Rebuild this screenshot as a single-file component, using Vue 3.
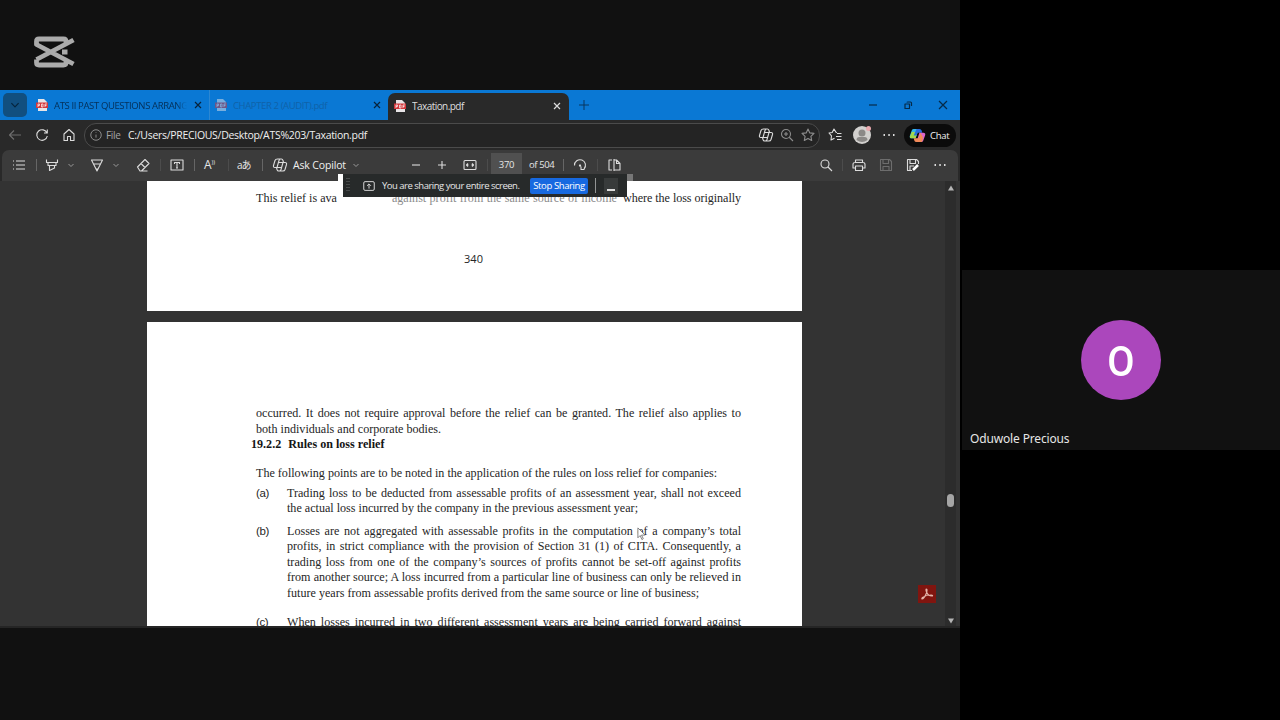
<script setup>
import { ref } from 'vue'

const page = ref(370)

const icons = {
  list: 'M2 4h1M2 8h1M2 12h1M5 4h9M5 8h9M5 12h9',
  highlighter: 'M2.500 2.500v3h11v-3M4 5.500v3h8v-3M5.500 8.500v5l5-2.500v-2.500',
  pen: 'M2.500 3h11L8 14zM4.500 7h7M7 12h2',
  eraser: 'M2.500 10l7.500-7.500 4 4-7.500 7.500h-1.500zM6 6.500l4 4M6.500 14h6',
  textbox: 'M2 3h12v10H2zM5.500 7V5.500h5V7M8 5.500v5.500M7 11h2',
  copilot: 'M5.500 2h4q1 0 1.500 1.500l.5 2H13q2 0 1.500 2L13 12.500q-.5 1.500-2 1.500H6.500q-1 0-1.500-1.500l-.5-2H3q-2 0-1.500-2L3 3.500Q3.500 2 5.500 2zM8.500 2Q7.500 2 7 3.500L5 10.500M7.500 14q1 0 1.500-1.500l2-7M6.500 5.500h5M4.500 10.500h5',
  minus: 'M4 8h8',
  plus: 'M4 8h8M8 4v8',
  fit: 'M3 3.500h10q1 0 1 1v7q0 1-1 1H3q-1 0-1-1v-7q0-1 1-1zM6 6.500L4.500 8 6 9.500M10 6.500L11.500 8 10 9.500M4.500 8h2M9.500 8h2',
  rotate: 'M2.500 8.500a5.500 5.500 0 1 1 9.500 3.500M9 9.500v3h3.500M7.500 8h1v1h-1z',
  pages: 'M6 3H3v10h3M8 2v12M8 3h2.500l3.500 3.500V13H8M10.500 3v3.500H14',
  search: 'M11 7a4 4 0 1 1-8 0 4 4 0 0 1 8 0zM10 10l4 4',
  print: 'M4.500 5.500V3h7v2.500M4.500 11H2V7.500q0-2 2-2h8q2 0 2 2V11h-2.500M4.500 9h7v4.500h-7z',
  save: 'M2.500 2.500h9l2 2v9h-11zM5 2.500v4h5.500v-4M5 13.500v-4h6v4',
  saveAs: 'M7 13.500H2.500v-11h9l2 2V7M5 2.500v4h5.500v-4M5 13v-4h4',
  dots: 'M2.500 8H4M7.300 8h1.500M12 8h1.500',
  back: 'M14 8H2.500M7 3.500L2.500 8 7 12.500',
  reload: 'M13 6A5.300 5.300 0 1 0 13.300 9M13.300 2.500V6H10',
  home: 'M3 7l5-4.500L13 7v6.500h-3.500V9.500h-3v4H3z',
  info: 'M14 8A6 6 0 1 1 2 8a6 6 0 0 1 12 0zM8 7.500v3.500M8 4.800v.7',
  zoomIn: 'M11.500 7a4.500 4.500 0 1 1-9 0 4.500 4.500 0 0 1 9 0zM10.500 10.500l3.500 3.500M7 5v4M5 7h4',
  star: 'M8 2l1.800 3.900 4.200.5-3.100 2.900.8 4.200L8 11.400l-3.700 2.100.8-4.200L2 6.400l4.200-.5z',
  favorites: 'M10 5.500L9 5.300 7 2 5.200 5.500 2 6l2.500 2.800L4 13l3.500-1.800M10 6.500h4.500M9 9.500h5.500M10 12.500h4.500',
  share: 'M3.500 3h9Q14 3 14 4.500v7q0 1.500-1.500 1.500h-9Q2 13 2 11.500v-7Q2 3 3.500 3zM8 11V6M5.800 7.800L8 5.600l2.200 2.200',
}

const rulesB = [
  'Losses are not aggregated with assessable profits in the computation of a company’s total',
  'profits, in strict compliance with the provision of Section 31 (1) of CITA. Consequently, a',
  'trading loss from one of the company’s sources of profits cannot be set-off against profits',
  'from another source; A loss incurred from a particular line of business can only be relieved in',
]
</script>

<template>
  <div class="meeting">
    <main class="shared">
      <header class="brand">
        <svg class="logo" viewBox="0 0 42 32">
          <path d="M33 8V5.500q0-2.500-2.500-2.500H6Q3.500 3 3.500 5.500V8.500L40.500 28M3.500 23.500L40.500 4M3.500 23.500v3Q3.500 29 6 29h24.500q2.500 0 2.500-2.500v-3M29 16h5.500" />
        </svg>
      </header>

      <section class="browser">
        <div class="tabs">
          <div class="tab-menu"><svg viewBox="0 0 10 10"><path d="M2 3.500l3 3 3-3" /></svg></div>
          <div class="tab first">
            <svg class="pdf" viewBox="0 0 12 12"><path class="sheet" d="M2 0h6l3 3v9H2z" /><path class="label" d="M0 3.500h12v5.500H0z" /><path class="mark" d="M2 8V5h1.500v1.500H2M5.500 5v3H7V5zM9 8V5h2M9 6.500h1.500" /></svg>
            <span class="tab-title">ATS II PAST QUESTIONS ARRANGE</span>
            <svg class="close" viewBox="0 0 8 8"><path d="M1 1l6 6M7 1L1 7" /></svg>
          </div>
          <div class="tab second">
            <svg class="pdf" viewBox="0 0 12 12"><path class="sheet" d="M2 0h6l3 3v9H2z" /><path class="label" d="M0 3.500h12v5.500H0z" /><path class="mark" d="M2 8V5h1.500v1.500H2M5.500 5v3H7V5zM9 8V5h2M9 6.500h1.500" /></svg>
            <span class="tab-title">CHAPTER 2 (AUDIT).pdf</span>
            <svg class="close" viewBox="0 0 8 8"><path d="M1 1l6 6M7 1L1 7" /></svg>
          </div>
          <div class="tab active">
            <svg class="pdf" viewBox="0 0 12 12"><path class="sheet" d="M2 0h6l3 3v9H2z" /><path class="label" d="M0 3.500h12v5.500H0z" /><path class="mark" d="M2 8V5h1.500v1.500H2M5.500 5v3H7V5zM9 8V5h2M9 6.500h1.500" /></svg>
            <span class="tab-title">Taxation.pdf</span>
            <svg class="close" viewBox="0 0 8 8"><path d="M1 1l6 6M7 1L1 7" /></svg>
          </div>
          <svg class="new-tab" viewBox="0 0 12 12"><path d="M6 1v10M1 6h10" /></svg>
          <div class="window-buttons">
            <svg viewBox="0 0 10 10"><path d="M1 5h8" /></svg>
            <svg viewBox="0 0 10 10"><path d="M2 4h4.500v4.500H2zM4 2.500Q4 2 5 2h2.500q1 0 1 1V6" /></svg>
            <svg viewBox="0 0 10 10"><path d="M1 1l8 8M9 1L1 9" /></svg>
          </div>
        </div>

        <div class="address-row">
          <svg class="icon dim back" viewBox="0 0 16 16"><path :d="icons.back" /></svg>
          <svg class="icon reload" viewBox="0 0 16 16"><path :d="icons.reload" /></svg>
          <svg class="icon home" viewBox="0 0 16 16"><path :d="icons.home" /></svg>
          <div class="address">
            <svg class="icon soft small" viewBox="0 0 16 16"><path :d="icons.info" /></svg>
            <span class="scheme">File</span>
            <span class="url">C:/Users/PRECIOUS/Desktop/ATS%203/Taxation.pdf</span>
            <svg class="icon push" viewBox="0 0 16 16"><path :d="icons.copilot" /></svg>
            <svg class="icon soft" viewBox="0 0 16 16"><path :d="icons.zoomIn" /></svg>
            <svg class="icon soft" viewBox="0 0 16 16"><path :d="icons.star" /></svg>
          </div>
          <svg class="icon favorites" viewBox="0 0 16 16"><path :d="icons.favorites" /></svg>
          <svg class="profile" viewBox="0 0 20 20">
            <circle cx="10" cy="10" r="9" fill="#d2d0ce" />
            <circle cx="10" cy="8" r="3.500" fill="#8b8987" />
            <path d="M4.500 15q0-3 3-3h5q3 0 3 3-5.500 4-11 0z" fill="#8b8987" />
            <circle cx="16.500" cy="3.500" r="2.500" fill="#e9a9ae" />
          </svg>
          <svg class="icon thick more" viewBox="0 0 16 16"><path :d="icons.dots" /></svg>
          <div class="chat">
            <svg viewBox="0 0 18 18">
              <path d="M5 2h5L7 12H3Q0 12 1 9l2-5.500Q3.500 2 5 2z" fill="#35b7e8" />
              <path d="M3 5L1 10q-.5 2 2 2h4l2-6z" fill="#a4d84c" />
              <path d="M8 2h3q2 0 2.500 2l.5 2H9L8 9H5z" fill="#276ce0" />
              <path d="M11 6h4q3 0 2 3l-2 5.500Q14.500 16 13 16H8z" fill="#dd65cd" />
              <path d="M5 12h5l2-6 3 5-1 4q-.5 1-2 1H8q-2 0-2.500-2z" fill="#f28a59" />
            </svg>
            <span>Chat</span>
          </div>
        </div>

        <div class="toolbar">
          <svg class="icon list" viewBox="0 0 16 16"><path :d="icons.list" /></svg>
          <i class="sep"></i>
          <svg class="icon tight" viewBox="0 0 16 16"><path :d="icons.highlighter" /></svg>
          <svg class="chevron" viewBox="0 0 8 8"><path d="M1.500 3L4 5.500 6.500 3" /></svg>
          <svg class="icon pen" viewBox="0 0 16 16"><path :d="icons.pen" /></svg>
          <svg class="chevron" viewBox="0 0 8 8"><path d="M1.500 3L4 5.500 6.500 3" /></svg>
          <svg class="icon eraser" viewBox="0 0 16 16"><path :d="icons.eraser" /></svg>
          <i class="sep faint"></i>
          <svg class="icon" viewBox="0 0 16 16"><path :d="icons.textbox" /></svg>
          <i class="sep"></i>
          <span class="glyph read">A<sup>))</sup></span>
          <i class="sep faint"></i>
          <span class="glyph translate">aあ</span>
          <i class="sep"></i>
          <svg class="icon copilot" viewBox="0 0 16 16"><path :d="icons.copilot" /></svg>
          <span class="ask">Ask Copilot</span>
          <svg class="chevron" viewBox="0 0 8 8"><path d="M1.500 3L4 5.500 6.500 3" /></svg>
          <svg class="icon zoom-out" viewBox="0 0 16 16"><path :d="icons.minus" /></svg>
          <svg class="icon zoom-in" viewBox="0 0 16 16"><path :d="icons.plus" /></svg>
          <svg class="icon fit" viewBox="0 0 16 16"><path :d="icons.fit" /></svg>
          <i class="sep faint"></i>
          <span class="page-box">{{ page }}</span>
          <span class="total">of 504</span>
          <i class="sep"></i>
          <svg class="icon" viewBox="0 0 16 16"><path :d="icons.rotate" /></svg>
          <i class="sep faint"></i>
          <svg class="icon" viewBox="0 0 16 16"><path :d="icons.pages" /></svg>
          <div class="file-tools">
            <svg class="icon" viewBox="0 0 16 16"><path :d="icons.search" /></svg>
            <i class="sep faint"></i>
            <svg class="icon" viewBox="0 0 16 16"><path :d="icons.print" /></svg>
            <svg class="icon dim wide" viewBox="0 0 16 16"><path :d="icons.save" /></svg>
            <svg class="icon wide" viewBox="0 0 16 16"><path :d="icons.saveAs" /><path class="nib" d="M8 13l5-5" /></svg>
            <svg class="icon thick wide" viewBox="0 0 16 16"><path :d="icons.dots" /></svg>
          </div>
        </div>

        <div class="viewer">
          <div class="pages">
            <article class="sheet-top">
              <p class="cut-line">
                <span>This relief is ava</span>
                <span class="covered">against profit from the same source of income</span>
                <span class="tail">where the loss originally</span>
              </p>
              <p class="folio">340</p>
            </article>
            <article class="sheet-main">
              <p class="line">occurred. It does not require approval before the relief can be granted. The relief also applies to</p>
              <p class="line w-184">both individuals and corporate bodies.</p>
              <h2><span>19.2.2</span><span>Rules on loss relief</span></h2>
              <p class="line intro w-461">The following points are to be noted in the application of the rules on loss relief for companies:</p>
              <div class="rule">
                <span class="letter">(a)</span>
                <div class="rule-text">
                  <p class="line">Trading loss to be deducted from assessable profits of an assessment year, shall not exceed</p>
                  <p class="line w-351">the actual loss incurred by the company in the previous assessment year;</p>
                </div>
              </div>
              <div class="rule b">
                <span class="letter">(b)</span>
                <div class="rule-text">
                  <p v-for="text in rulesB" :key="text" class="line">{{ text }}</p>
                  <p class="line w-411">future years from assessable profits derived from the same source or line of business;</p>
                </div>
              </div>
              <div class="rule c">
                <span class="letter">(c)</span>
                <div class="rule-text">
                  <p class="line">When losses incurred in two different assessment years are being carried forward against</p>
                </div>
              </div>
            </article>
          </div>
          <div class="scrollbar">
            <svg viewBox="0 0 8 8"><path d="M4 1.500L7 6.500H1z" /></svg>
            <i class="thumb"></i>
            <svg viewBox="0 0 8 8"><path d="M1 1.500h6L4 6.500z" /></svg>
          </div>
          <div class="acrobat">
            <svg viewBox="0 0 18 18"><path d="M4 14q2 0 4.500-6Q9.500 4 8.500 4t0 3q1.500 4 5.500 4 1.500-.5-1-1Q8 10 4.500 12.500 3.500 13.500 4 14z" /></svg>
          </div>
          <svg class="cursor" viewBox="0 0 10 16"><path d="M1 1v11l2.500-2.500L5.500 14l1.500-1-2-4h4z" /></svg>
        </div>

        <div class="share-mask"></div>
        <div class="share-edge"></div>
        <div class="share-bar">
          <i class="grip"></i>
          <svg class="icon small" viewBox="0 0 16 16"><path :d="icons.share" /></svg>
          <span class="share-text">You are sharing your entire screen.</span>
          <button class="stop">Stop Sharing</button>
          <i class="share-sep"></i>
          <button class="minimise"><i></i></button>
        </div>
      </section>
    </main>

    <aside class="people">
      <div class="tile">
        <div class="avatar"><span>O</span></div>
        <span class="name">Oduwole Precious</span>
      </div>
    </aside>
  </div>
</template>

<style>
body {
  background: #000;
}
</style>

<style scoped>
.meeting {
  display: flex;
  width: 1280px;
  height: 720px;
  overflow: hidden;
  background: #000;
  font-family: "Open Sans", "Noto Sans", sans-serif;
  color: #e6e6e6;
}

.meeting * {
  box-sizing: border-box;
}

p, h2 {
  margin: 0;
}

svg {
  display: block;
  flex: none;
  fill: none;
  stroke-linejoin: round;
}

.shared {
  width: 960px;
  background: #111;
}

.brand {
  height: 90px;
  padding: 36px 0 0 33px;
}

.logo {
  width: 42px;
  height: 32px;
  stroke: #ababab;
  stroke-width: 4.8;
}

.browser {
  position: relative;
  height: 538px;
  background: #292929;
}

/* Tab strip */
.tabs {
  display: flex;
  align-items: center;
  height: 30px;
  background: #0a78d4;
  font-size: 9.5px;
}

.tab-menu {
  display: flex;
  align-items: center;
  justify-content: center;
  width: 24px;
  height: 24px;
  margin-left: 3px;
  border-radius: 5px;
  background: #114f80;
}

.tab-menu svg {
  width: 12px;
  stroke: #06243c;
}

.tab {
  display: flex;
  align-items: center;
  height: 30px;
}

.tab-title {
  flex: 1;
  margin-left: 6px;
  overflow: hidden;
  white-space: nowrap;
}

.pdf {
  width: 12px;
  height: 12px;
}

.sheet {
  fill: #e8e4e6;
}

.label {
  fill: #d3383c;
}

.mark {
  stroke: #fff;
  stroke-width: 0.7;
}

.close {
  width: 8px;
  height: 8px;
  stroke: #08233b;
  stroke-width: 1.2;
}

.first {
  width: 183px;
  padding: 0 7px 0 9px;
  border-right: 1px solid #2c87d2;
  color: #052f57;
  letter-spacing: -0.37px;
}

.first .tab-title {
  margin-right: 7px;
  mask-image: linear-gradient(90deg, #000 92%, transparent);
}

.second {
  width: 178px;
  padding: 0 7px 0 5px;
  color: #1062a8;
  letter-spacing: -0.38px;
}

.second .pdf {
  opacity: 0.5;
}

.active {
  width: 181px;
  height: 27px;
  margin-top: 3px;
  padding: 0 8px 2px 6px;
  border-radius: 7px 7px 0 0;
  background: #292929;
  color: #dedede;
  letter-spacing: -0.55px;
  font-size: 10px;
}

.active .close {
  stroke: #ddd;
}

.new-tab {
  width: 12px;
  margin-left: 9px;
  stroke: #08375f;
}

.window-buttons {
  display: flex;
  gap: 25px;
  margin-left: auto;
  padding-right: 12px;
}

.window-buttons svg {
  width: 10px;
  stroke: #062a48;
  stroke-width: 1.2;
}

/* Address row */
.address-row {
  display: flex;
  align-items: center;
  height: 30px;
}

.icon {
  width: 16px;
  height: 16px;
  stroke: #dcdcdc;
  stroke-width: 1.1;
}

.dim {
  stroke: #6d6d6d;
}

.soft {
  stroke: #8e8e8e;
}

.thick {
  stroke-width: 1.8;
}

.small {
  width: 14px;
  height: 14px;
}

.back {
  margin-left: 7px;
}

.reload {
  margin-left: 11px;
}

.home {
  margin-left: 11px;
}

.address {
  display: flex;
  align-items: center;
  width: 736px;
  height: 25px;
  margin-left: 7px;
  padding: 0 3px 0 4px;
  border: 1px solid #4b4b4b;
  border-radius: 12px;
  background: #242424;
  font-size: 10.5px;
}

.scheme {
  width: 22px;
  margin-left: 3px;
  font-size: 10px;
  letter-spacing: -0.3px;
  color: #a5a5a5;
}

.url {
  color: #f0f0f0;
  white-space: nowrap;
  letter-spacing: -0.3px;
}

.address .icon + .icon {
  margin-left: 5px;
}

.address .push {
  margin-left: auto;
}

.favorites {
  margin-left: 7px;
}

.profile {
  width: 20px;
  height: 20px;
  margin-left: 9px;
}

.more {
  margin-left: 9px;
}

.chat {
  display: flex;
  align-items: center;
  gap: 4px;
  width: 52px;
  height: 23px;
  margin-left: 7px;
  padding-left: 5px;
  border-radius: 12px;
  background: #0b0b0b;
  font-size: 9.5px;
  letter-spacing: -0.3px;
  color: #f2f2f2;
}

.chat svg {
  width: 17px;
}

/* PDF toolbar */
.toolbar {
  display: flex;
  align-items: center;
  height: 31px;
  margin: 0 2px;
  padding: 0 10px 2px 0;
  border-radius: 7px 7px 0 0;
  background: #3b3b3b;
  font-size: 10.5px;
}

.toolbar > .icon {
  margin-left: 8px;
}

.toolbar > .list {
  margin-left: 9px;
}

.toolbar > .tight {
  margin-left: 7px;
}

.toolbar > .pen {
  margin-left: 14px;
}

.toolbar > .eraser {
  margin-left: 15px;
}

.toolbar > .copilot {
  margin-left: 9px;
}

.toolbar > .zoom-out {
  margin-left: 48px;
}

.toolbar > .zoom-in {
  margin-left: 10px;
}

.toolbar > .fit {
  margin-left: 12px;
}

.sep {
  width: 1px;
  height: 12px;
  margin-left: 9px;
  background: #666;
}

.faint {
  background: #4c4c4c;
}

.chevron {
  width: 8px;
  margin-left: 7px;
  stroke: #999;
}

.glyph {
  flex: none;
  width: 16px;
  margin-left: 8px;
  font-size: 12px;
  line-height: 16px;
  white-space: nowrap;
}

.read {
  padding-left: 1px;
}

.read sup {
  position: relative;
  top: -5px;
  font-size: 6px;
  line-height: 0;
  vertical-align: baseline;
}

.translate {
  font-family: "Open Sans", "Noto Sans CJK JP", sans-serif;
  font-size: 10px;
  letter-spacing: -1px;
}

.ask {
  width: 53px;
  margin-left: 5px;
  color: #f0f0f0;
  white-space: nowrap;
  letter-spacing: -0.15px;
}

.ask + .chevron {
  margin-left: 6px;
}

.page-box {
  width: 31px;
  height: 23px;
  margin-left: 3px;
  background: #505050;
  font-size: 9.5px;
  line-height: 24px;
  text-align: center;
  letter-spacing: -0.3px;
}

.total {
  width: 26px;
  margin-left: 7px;
  font-size: 9.5px;
  white-space: nowrap;
  letter-spacing: -0.4px;
}

.total + .sep {
  margin-left: 8px;
}

.file-tools {
  display: flex;
  align-items: center;
  margin-left: auto;
}

.file-tools .sep {
  margin: 0 8px;
}

.file-tools .wide {
  margin-left: 11px;
}

.nib {
  stroke: #fff;
  stroke-width: 2.5;
}

/* Document */
.viewer {
  position: relative;
  display: flex;
  height: 447px;
  border-bottom: 2px solid #252525;
  background: #333;
  overflow: hidden;
}

.pages {
  flex: 1;
  padding-left: 147px;
}

.sheet-top, .sheet-main {
  width: 655px;
  background: #fff;
  color: #262626;
  font-family: "Liberation Serif", serif;
  font-size: 12.1px;
  line-height: 15.4px;
}

.sheet-top {
  height: 130px;
  padding-top: 10px;
}

.cut-line {
  display: flex;
  width: 485px;
  margin-left: 109px;
  white-space: nowrap;
}

.covered {
  width: 225px;
  margin-left: 55px;
  color: #8b8b8b;
  text-align-last: justify;
}

.tail {
  margin-left: auto;
  letter-spacing: -0.05px;
}

.folio {
  padding-top: 45px;
  font-family: "Open Sans", sans-serif;
  font-size: 11px;
  text-align: center;
  text-indent: -2px;
}

.sheet-main {
  height: 306px;
  margin-top: 11px;
  padding: 84.4px 61px 0 109px;
}

.line {
  text-align-last: justify;
  white-space: nowrap;
}

.w-184 {
  width: 184px;
}

.w-351 {
  width: 351px;
}

.w-411 {
  width: 411px;
}

.w-461 {
  width: 461px;
}

h2 {
  display: flex;
  gap: 7px;
  margin-left: -5px;
  font-size: 12.1px;
  line-height: 15.4px;
  color: #151515;
}

.intro {
  margin-top: 13px;
}

.rule {
  display: flex;
  margin-top: 4.6px;
}

.rule.b {
  margin-top: 7.5px;
}

.rule.c {
  margin-top: 13.9px;
}

.letter {
  width: 31px;
  font-family: "Liberation Sans", sans-serif;
  font-size: 11.5px;
  letter-spacing: -0.4px;
}

.rule-text {
  flex: 1;
}

.scrollbar {
  display: flex;
  flex-direction: column;
  align-items: center;
  width: 11px;
  margin-right: 4px;
  padding: 3px 0 1px;
  background: #2c2c2c;
}

.scrollbar svg {
  width: 8px;
  fill: #b5b5b5;
}

.thumb {
  width: 7px;
  height: 13px;
  margin: 302px 0 auto;
  border-radius: 4px;
  background: #a5a5a5;
}

.acrobat {
  position: absolute;
  top: 404px;
  left: 918px;
  width: 18px;
  height: 18px;
  background: #80150f;
}

.acrobat svg {
  stroke: #e4b5aa;
  stroke-width: 1.2;
}

.cursor {
  position: absolute;
  top: 346px;
  left: 637px;
  width: 9px;
  fill: #fff;
  stroke: #777;
}

/* Floating share notice */
.share-mask {
  position: absolute;
  top: 84px;
  left: 338px;
  width: 6px;
  height: 12px;
  background: #fff;
}

.share-edge {
  position: absolute;
  top: 84px;
  left: 627px;
  width: 6px;
  height: 7px;
  background: #777;
}

.share-bar {
  position: absolute;
  top: 84px;
  left: 343px;
  display: flex;
  align-items: center;
  width: 284px;
  height: 23px;
  padding-left: 3px;
  background: #272a2a;
  font-size: 9.5px;
}

.grip {
  width: 4px;
  height: 15px;
  margin-right: 12px;
  background: repeating-linear-gradient(#484b4b 0 1px, transparent 1px 3px);
}

.share-text {
  width: 139px;
  margin-left: 6px;
  white-space: nowrap;
  letter-spacing: -0.5px;
}

.stop {
  width: 58px;
  height: 16px;
  margin-left: 9px;
  padding: 0;
  border: 0;
  border-radius: 2px;
  background: #1769e0;
  color: #fff;
  font: 9.5px/16px "Open Sans", sans-serif;
  letter-spacing: -0.4px;
  white-space: nowrap;
}

.share-sep {
  width: 1px;
  height: 15px;
  margin-left: 7px;
  background: #929494;
}

.minimise {
  display: flex;
  align-items: flex-end;
  justify-content: center;
  width: 14px;
  height: 16px;
  margin-left: 8px;
  padding: 0 0 3px;
  border: 0;
  background: #383b3b;
}

.minimise i {
  width: 8px;
  height: 2px;
  background: #ddd;
}

/* Participant */
.people {
  display: flex;
  align-items: center;
  width: 320px;
  padding-left: 2px;
}

.tile {
  display: flex;
  flex-direction: column;
  width: 318px;
  height: 180px;
  background: #111;
}

.avatar {
  width: 80px;
  height: 80px;
  margin: 50px 0 0 119px;
  border-radius: 50%;
  background: #ab47bc;
  color: #fff;
  font: 500 43px/82px Roboto, sans-serif;
  text-align: center;
}

.avatar span {
  display: inline-block;
  transform: scaleX(0.92);
}

.name {
  margin: 29px 0 0 8px;
  font-family: "Noto Sans", sans-serif;
  font-size: 12px;
  line-height: 20px;
  letter-spacing: -0.15px;
}
</style>
